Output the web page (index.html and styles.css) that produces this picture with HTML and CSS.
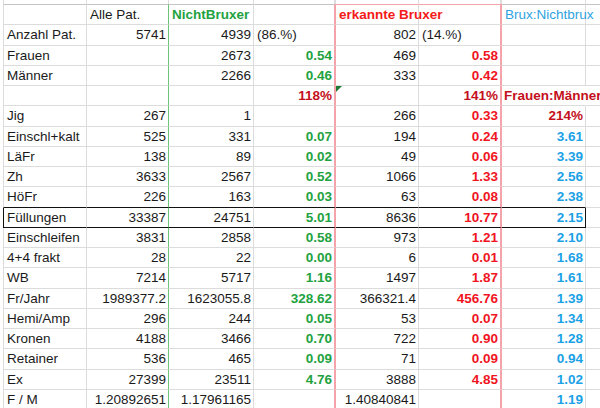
FILE: index.html
```html
<!DOCTYPE html>
<html lang="de">
<head>
<meta charset="utf-8">
<title>Bruxer Tabelle</title>
<link rel="stylesheet" href="styles.css">
</head>
<body>
<div class="sheet">
  <div class="row stub">
    <div class="c"></div>
    <div class="c"></div>
    <div class="c"></div>
    <div class="c"></div>
    <div class="c"></div>
    <div class="c"></div>
    <div class="c"></div>
    <div class="c"></div>
  </div>
  <div class="row head">
    <div class="c"></div>
    <div class="c">Alle Pat.</div>
    <div class="c g">NichtBruxer</div>
    <div class="c"></div>
    <div class="c r">erkannte Bruxer</div>
    <div class="c"></div>
    <div class="c bl">Brux:Nichtbrux</div>
    <div class="c"></div>
  </div>
  <div class="row">
    <div class="c">Anzahl Pat.</div>
    <div class="c n">5741</div>
    <div class="c n">4939</div>
    <div class="c">(86.%)</div>
    <div class="c n">802</div>
    <div class="c">(14.%)</div>
    <div class="c"></div>
    <div class="c"></div>
  </div>
  <div class="row">
    <div class="c">Frauen</div>
    <div class="c n"></div>
    <div class="c n">2673</div>
    <div class="c n g">0.54</div>
    <div class="c n">469</div>
    <div class="c n r">0.58</div>
    <div class="c"></div>
    <div class="c"></div>
  </div>
  <div class="row">
    <div class="c">Männer</div>
    <div class="c n"></div>
    <div class="c n">2266</div>
    <div class="c n g">0.46</div>
    <div class="c n">333</div>
    <div class="c n r">0.42</div>
    <div class="c"></div>
    <div class="c"></div>
  </div>
  <div class="row">
    <div class="c"></div>
    <div class="c"></div>
    <div class="c"></div>
    <div class="c n dr">118%</div>
    <div class="c"><span class="flag"></span></div>
    <div class="c n dr">141%</div>
    <div class="c dr over">Frauen:Männer</div>
    <div class="c"></div>
  </div>
  <div class="row">
    <div class="c">Jig</div>
    <div class="c n">267</div>
    <div class="c n">1</div>
    <div class="c n"></div>
    <div class="c n">266</div>
    <div class="c n r">0.33</div>
    <div class="c n dr">214%</div>
    <div class="c"></div>
  </div>
  <div class="row">
    <div class="c">Einschl+kalt</div>
    <div class="c n">525</div>
    <div class="c n">331</div>
    <div class="c n g">0.07</div>
    <div class="c n">194</div>
    <div class="c n r">0.24</div>
    <div class="c n b">3.61</div>
    <div class="c"></div>
  </div>
  <div class="row">
    <div class="c">LäFr</div>
    <div class="c n">138</div>
    <div class="c n">89</div>
    <div class="c n g">0.02</div>
    <div class="c n">49</div>
    <div class="c n r">0.06</div>
    <div class="c n b">3.39</div>
    <div class="c"></div>
  </div>
  <div class="row">
    <div class="c">Zh</div>
    <div class="c n">3633</div>
    <div class="c n">2567</div>
    <div class="c n g">0.52</div>
    <div class="c n">1066</div>
    <div class="c n r">1.33</div>
    <div class="c n b">2.56</div>
    <div class="c"></div>
  </div>
  <div class="row above-box">
    <div class="c">HöFr</div>
    <div class="c n">226</div>
    <div class="c n">163</div>
    <div class="c n g">0.03</div>
    <div class="c n">63</div>
    <div class="c n r">0.08</div>
    <div class="c n b">2.38</div>
    <div class="c"></div>
  </div>
  <div class="row boxed">
    <div class="c">Füllungen</div>
    <div class="c n">33387</div>
    <div class="c n">24751</div>
    <div class="c n g">5.01</div>
    <div class="c n">8636</div>
    <div class="c n r">10.77</div>
    <div class="c n b">2.15</div>
    <div class="c"></div>
  </div>
  <div class="row">
    <div class="c">Einschleifen</div>
    <div class="c n">3831</div>
    <div class="c n">2858</div>
    <div class="c n g">0.58</div>
    <div class="c n">973</div>
    <div class="c n r">1.21</div>
    <div class="c n b">2.10</div>
    <div class="c"></div>
  </div>
  <div class="row">
    <div class="c">4+4 frakt</div>
    <div class="c n">28</div>
    <div class="c n">22</div>
    <div class="c n g">0.00</div>
    <div class="c n">6</div>
    <div class="c n r">0.01</div>
    <div class="c n b">1.68</div>
    <div class="c"></div>
  </div>
  <div class="row">
    <div class="c">WB</div>
    <div class="c n">7214</div>
    <div class="c n">5717</div>
    <div class="c n g">1.16</div>
    <div class="c n">1497</div>
    <div class="c n r">1.87</div>
    <div class="c n b">1.61</div>
    <div class="c"></div>
  </div>
  <div class="row">
    <div class="c">Fr/Jahr</div>
    <div class="c n">1989377.2</div>
    <div class="c n">1623055.8</div>
    <div class="c n g">328.62</div>
    <div class="c n">366321.4</div>
    <div class="c n r">456.76</div>
    <div class="c n b">1.39</div>
    <div class="c"></div>
  </div>
  <div class="row">
    <div class="c">Hemi/Amp</div>
    <div class="c n">296</div>
    <div class="c n">244</div>
    <div class="c n g">0.05</div>
    <div class="c n">53</div>
    <div class="c n r">0.07</div>
    <div class="c n b">1.34</div>
    <div class="c"></div>
  </div>
  <div class="row">
    <div class="c">Kronen</div>
    <div class="c n">4188</div>
    <div class="c n">3466</div>
    <div class="c n g">0.70</div>
    <div class="c n">722</div>
    <div class="c n r">0.90</div>
    <div class="c n b">1.28</div>
    <div class="c"></div>
  </div>
  <div class="row">
    <div class="c">Retainer</div>
    <div class="c n">536</div>
    <div class="c n">465</div>
    <div class="c n g">0.09</div>
    <div class="c n">71</div>
    <div class="c n r">0.09</div>
    <div class="c n b">0.94</div>
    <div class="c"></div>
  </div>
  <div class="row">
    <div class="c">Ex</div>
    <div class="c n">27399</div>
    <div class="c n">23511</div>
    <div class="c n g">4.76</div>
    <div class="c n">3888</div>
    <div class="c n r">4.85</div>
    <div class="c n b">1.02</div>
    <div class="c"></div>
  </div>
  <div class="row">
    <div class="c">F / M</div>
    <div class="c n">1.20892651</div>
    <div class="c n">1.17961165</div>
    <div class="c n"></div>
    <div class="c n">1.40840841</div>
    <div class="c n"></div>
    <div class="c n b">1.19</div>
    <div class="c"></div>
  </div>
</div>
</body>
</html>
```

FILE: styles.css
```css
html, body {
  margin: 0;
  padding: 0;
  background: #ffffff;
  overflow: hidden;
}

body {
  width: 600px;
  height: 408px;
  font-family: "Liberation Sans", Arial, sans-serif;
  font-size: 13.5px;
  color: #1a1a1a;
}

.sheet {
  display: grid;
  grid-template-columns: 84px 82px 85px 82px 83px 83px 84px 30px;
  grid-template-rows: 4px 21.25px repeat(19, 20.25px);
  margin: 0 0 0 3px;
}

.row {
  display: contents;
}

.c {
  box-sizing: border-box;
  border-right: 1px solid #dcdcdc;
  border-bottom: 1px solid #dcdcdc;
  padding: 0 2px 0 3px;
  white-space: nowrap;
  line-height: 19px;
  overflow: visible;
  position: relative;
}

.stub > .c {
  border-bottom: 0;
}

.row > .c:nth-child(1) {
  border-left: 1px solid #dcdcdc;
}

.row > .c:nth-child(2) {
  border-right: 1px solid #6cc47a;
}

.row > .c:nth-child(4) {
  border-right: 2px solid #f5a3ab;
}

.row > .c:nth-child(6) {
  border-right: 2px solid #f5a3ab;
}

.stub > .c:nth-child(2),
.stub > .c:nth-child(4),
.stub > .c:nth-child(6) {
  border-right-color: #dcdcdc;
}

.head > .c {
  border-top: 1px solid #c4c4c4;
}

.head > .c:nth-child(5),
.head > .c:nth-child(6) {
  border-top-color: #f5a3ab;
}

.n {
  text-align: right;
}

.g {
  color: #22a23f;
  font-weight: bold;
}

.r {
  color: #f0141e;
  font-weight: bold;
}

.dr {
  color: #c4101c;
  font-weight: bold;
}

.b {
  color: #1aa1e6;
  font-weight: bold;
}

.bl {
  color: #2fa3e0;
}

.head .r {
  color: #f31a1a;
}

.over {
  padding-left: 2px;
  border-right-color: transparent;
}

.flag {
  position: absolute;
  top: 0;
  left: 0;
  width: 0;
  height: 0;
  border-top: 6px solid #1e7a34;
  border-right: 6px solid transparent;
}

.above-box > .c:not(:last-child) {
  border-bottom: 1px solid #111111;
}

.boxed > .c:not(:last-child) {
  border-bottom: 1px solid #111111;
}

.boxed > .c:nth-child(1) {
  border-left: 1px solid #111111;
}

.boxed > .c:nth-child(7) {
  border-right: 1px solid #111111;
}
```
